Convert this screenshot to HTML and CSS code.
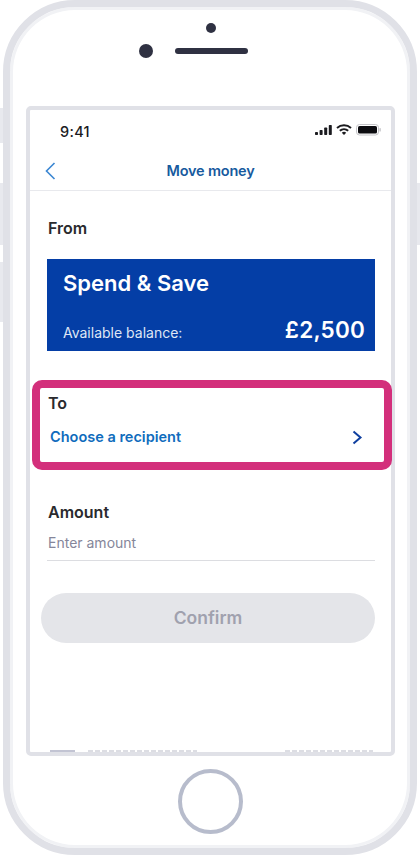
FILE: index.html
```html
<!DOCTYPE html>
<html lang="en">
 <head>
   <title>Move money</title>
   <meta charset="utf-8"/>
   <link rel="stylesheet" href="styles.css">
 </head>

 <body>
   <div id="wrap">
      <span class="side side_mute"></span>
      <span class="side side_up"></span>
      <span class="side side_down"></span>
      <span class="side side_power"></span>

      <section id="phone">
         <div class="sensor"></div>
         <div class="earpiece">
            <span class="camera"></span>
            <span class="speaker"></span>
         </div>

         <section id="screen">
            <header class="status">
               <span class="time">9:41</span>
               <svg class="status_icons" width="66" height="12" viewBox="0 0 66 12">
                  <rect x="0" y="8" width="3" height="3" rx="0.7" fill="#1b1b1f"/>
                  <rect x="4.6" y="6" width="3" height="5" rx="0.7" fill="#1b1b1f"/>
                  <rect x="9.2" y="3.5" width="3" height="7.5" rx="0.7" fill="#1b1b1f"/>
                  <rect x="13.8" y="1" width="3" height="10" rx="0.7" fill="#1b1b1f"/>
                  <path d="M22 4 A10.5 10.5 0 0 1 36 4" fill="none" stroke="#1b1b1f" stroke-width="2"/>
                  <path d="M24.8 6.7 A6.5 6.5 0 0 1 33.2 6.7" fill="none" stroke="#1b1b1f" stroke-width="2"/>
                  <path d="M29 11 L26.8 8.7 A3.2 3.2 0 0 1 31.2 8.7 Z" fill="#1b1b1f"/>
                  <rect x="41.5" y="0.5" width="22" height="10.5" rx="3" fill="none" stroke="#c4c4c8"/>
                  <rect x="43" y="2" width="19" height="7.5" rx="1.6" fill="#0c0c10"/>
                  <rect x="64.4" y="4" width="1.4" height="3.6" rx="0.7" fill="#c4c4c8"/>
               </svg>
            </header>

            <nav class="topbar">
               <svg class="back" width="11" height="18" viewBox="0 0 11 18">
                  <path d="M9.5 1 L1.5 9 L9.5 17" fill="none" stroke="#3a86d2" stroke-width="1.6"/>
               </svg>
               <h1>Move money</h1>
            </nav>

            <section class="content">
               <h2 class="from_title">From</h2>
               <article class="account">
                  <h3>Spend &amp; Save</h3>
                  <p>
                     <span class="label">Available balance:</span>
                     <strong>£2,500</strong>
                  </p>
               </article>

               <section class="to">
                  <h2>To</h2>
                  <a class="recipient">
                     <span>Choose a recipient</span>
                     <svg width="11" height="15" viewBox="0 0 11 15">
                        <path d="M1.5 1.5 L8.5 7.5 L1.5 13.5" fill="none" stroke="#0f3f9f" stroke-width="2"/>
                     </svg>
                  </a>
               </section>

               <h2 class="amount_title">Amount</h2>
               <div class="amount_input">Enter amount</div>

               <div class="confirm">Confirm</div>
            </section>

            <div class="cut_row">
               <span class="cut_tab"></span>
               <span class="cut_text"></span>
               <span class="cut_text cut_text_right"></span>
            </div>
         </section>

         <div class="home"></div>
      </section>
   </div>
 </body>
</html>
```

FILE: styles.css
```css
/*####### reset #######*/
*{margin:0; padding:0; box-sizing:border-box;}
body{background-color:#fff; font-family:Inter, "Liberation Sans", sans-serif; color:#26262b;}
#wrap{position:relative; width:420px; height:856px; overflow:hidden;}

/*####### phone #######*/
#phone{width:414px; height:855px; margin-left:3px; border:7px solid #e0e1e7; border-radius:72px; background-color:#fff; box-shadow:inset 0 0 0 3px #f1f2f5; display:flex; flex-direction:column; align-items:center;}

.side{position:absolute; width:3px; background-color:#e8e9ee;}
.side_mute{left:0; top:108px; height:35px;}
.side_up{left:0; top:183px; height:62px;}
.side_down{left:0; top:262px; height:60px;}
.side_power{right:0; top:183px; height:62px;}

.sensor{width:10px; height:10px; margin:16px 0 0 2px; border-radius:50%; background-color:#2f3142;}
.earpiece{position:relative; width:73px; height:6px; margin:15px 0 0 2px;}
.speaker{display:block; height:6px; border-radius:3px; background-color:#2f3142;}
.camera{position:absolute; left:-36px; top:-4px; width:14px; height:14px; border-radius:50%; background-color:#2f3142;}

/*####### screen #######*/
#screen{width:369px; height:650px; margin-top:52px; margin-left:1px; border:4px solid #e0e1e7; border-radius:5px; background-color:#fff; display:flex; flex-direction:column;}

.status{height:41px; padding:12px 10px 0 30px; display:flex; justify-content:space-between; align-items:flex-start;}
.time{font-size:14.5px; font-weight:500; line-height:20px; color:#1b1b1f; letter-spacing:0.3px;}
.status_icons{margin-top:2px;}

.topbar{position:relative; height:40px; border-bottom:1px solid #e8e9ed; text-align:center;}
.topbar h1{font-size:14.5px; font-weight:600; line-height:40px; color:#175a9e; letter-spacing:-0.2px;}
.back{position:absolute; left:15px; top:11px;}

/*####### form #######*/
.content{flex:1; padding:0 16px 0 17px;}
.content h2{font-size:16px; font-weight:600; line-height:20px; color:#2a2a2e;}
.from_title{margin-top:27px; margin-left:1px;}

.account{height:92px; margin-top:21px; padding:11px 10px 0 16px; background-color:#043ea6; color:#fff;}
.account h3{font-size:22px; font-weight:600; line-height:26px;}
.account p{display:flex; justify-content:space-between; align-items:baseline; margin-top:20px;}
.label{font-size:14px; color:#dfe6f5;}
.account strong{font-size:22.5px; font-weight:600; letter-spacing:0.2px;}

.to{height:90px; margin:29px -17px 0 -15px; padding:5px 0 0 8px; border:8px solid #d32f7b; border-radius:10px; background-color:#fff;}
.recipient{display:flex; justify-content:space-between; align-items:center; margin-top:14px; padding:0 21px 0 2px; font-size:14.5px; font-weight:600; color:#0f6cbd;}
.recipient svg{margin-top:3px;}

.amount_title{margin-top:32px; margin-left:1px;}
.amount_input{height:37px; margin-top:2px; padding:9px 0 0 1px; border-bottom:1px solid #dcdde1; font-size:14px; line-height:20px; color:#85869a;}

.confirm{height:50px; margin:32px 0 0 -6px; border-radius:25px; background-color:#e4e5e9; font-size:17.5px; font-weight:600; line-height:50px; text-align:center; color:#a0a1ae;}

/*####### content cut off by the screen edge #######*/
.cut_row{height:2px; padding:0 18px 0 20px; display:flex; overflow:hidden;}
.cut_tab{width:25px; height:2px; background-color:#c2c4d3;}
.cut_text{width:109px; height:2px; margin-left:13px; background:repeating-linear-gradient(90deg, #dcdde3 0 5px, #fff 5px 7px);}
.cut_text_right{width:88px; margin-left:auto;}

/*####### home button #######*/
.home{width:65px; height:65px; margin-top:13px; border:4px solid #b7bccc; border-radius:50%;}
```
